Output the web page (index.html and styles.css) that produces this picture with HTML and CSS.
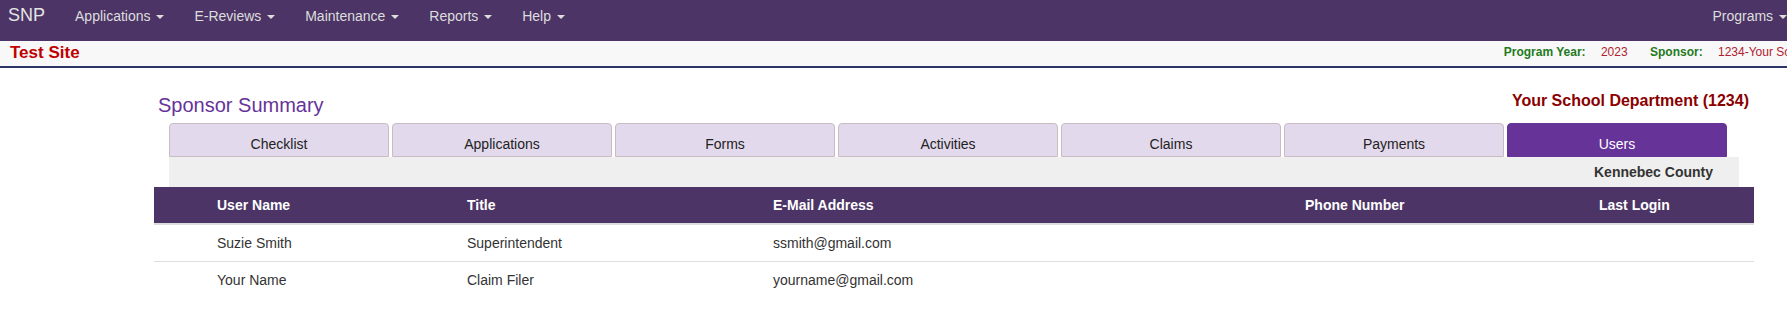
FILE: index.html
```html
<!DOCTYPE html>
<html lang="en">
<head>
    <meta charset="UTF-8">
    <meta name="viewport" content="width=device-width, initial-scale=1.0">
    <title>SNP - Sponsor Summary</title>
    <link rel="stylesheet" href="styles.css">
</head>
<body>
    <nav class="navbar">
        <a class="brand" href="#">SNP</a>
        <ul class="nav">
            <li><a href="#">Applications <span class="caret"></span></a></li>
            <li><a href="#">E-Reviews <span class="caret"></span></a></li>
            <li><a href="#">Maintenance <span class="caret"></span></a></li>
            <li><a href="#">Reports <span class="caret"></span></a></li>
            <li><a href="#">Help <span class="caret"></span></a></li>
        </ul>
        <ul class="nav nav-right">
            <li><a href="#">Programs <span class="caret"></span></a></li>
        </ul>
    </nav>

    <div class="site-bar">
        <span class="site-name">Test Site</span>
        <div class="site-info">
            <span class="info-label">Program Year:</span>
            <span class="info-value">2023</span>
            <span class="info-label">Sponsor:</span>
            <span class="info-value">1234-Your School Department</span>
        </div>
    </div>

    <div class="main">
        <div class="page-head">
            <h2>Sponsor Summary</h2>
            <h4>Your School Department (1234)</h4>
        </div>

        <ul class="tabs">
            <li><a href="#">Checklist</a></li>
            <li><a href="#">Applications</a></li>
            <li><a href="#">Forms</a></li>
            <li><a href="#">Activities</a></li>
            <li><a href="#">Claims</a></li>
            <li><a href="#">Payments</a></li>
            <li class="active"><a href="#">Users</a></li>
        </ul>
        <div class="tab-bar">Kennebec County</div>

        <table class="users">
            <colgroup>
                <col class="col-edit">
                <col class="col-name">
                <col class="col-title">
                <col class="col-email">
                <col class="col-phone">
                <col class="col-login">
            </colgroup>
            <thead>
                <tr>
                    <th></th>
                    <th>User Name</th>
                    <th>Title</th>
                    <th>E-Mail Address</th>
                    <th>Phone Number</th>
                    <th>Last Login</th>
                </tr>
            </thead>
            <tbody>
                <tr>
                    <td></td>
                    <td>Suzie Smith</td>
                    <td>Superintendent</td>
                    <td>ssmith@gmail.com</td>
                    <td></td>
                    <td></td>
                </tr>
                <tr>
                    <td></td>
                    <td>Your Name</td>
                    <td>Claim Filer</td>
                    <td>yourname@gmail.com</td>
                    <td></td>
                    <td></td>
                </tr>
            </tbody>
        </table>
    </div>
</body>
</html>
```

FILE: styles.css
```css
body {
    margin: 0;
    font-family: "Liberation Sans", Arial, sans-serif;
    font-size: 14px;
    color: #333;
    overflow-x: hidden;
}
a {
    text-decoration: none;
}

/* top menu */
.navbar {
    display: flex;
    align-items: flex-start;
    height: 41px;
    background-color: #4c3566;
}
.brand {
    padding: 5px 15px 0 8px;
    font-size: 18px;
    line-height: 20px;
    color: #e4e4e4;
}
.nav {
    display: flex;
    list-style: none;
    margin: 0;
    padding: 0;
}
.nav a {
    display: block;
    padding: 6px 15px 0;
    line-height: 20px;
    color: #dddddd;
    white-space: nowrap;
}
.nav-right {
    margin-left: auto;
    margin-right: -15px;
}
.caret {
    display: inline-block;
    width: 0;
    height: 0;
    margin-left: 2px;
    vertical-align: middle;
    border-top: 4px solid;
    border-right: 4px solid transparent;
    border-left: 4px solid transparent;
}

/* site bar */
.site-bar {
    display: flex;
    align-items: flex-start;
    height: 23px;
    padding: 2px 0 0 10px;
    background-color: #f8f8f8;
    border-bottom: 2px solid #2b3566;
    white-space: nowrap;
}
.site-name {
    font-size: 17px;
    font-weight: bold;
    line-height: 20px;
    color: #c00000;
}
.site-info {
    flex: none;
    margin: 1px -92px 0 auto;
    font-size: 12px;
    line-height: 16px;
}
.info-label {
    margin-left: 19px;
    font-weight: bold;
    color: #1f7a22;
}
.info-label:first-child {
    margin-left: 0;
}
.info-value {
    margin-left: 12px;
    color: #b02030;
}

/* page */
.main {
    width: 1600px;
    margin-left: 154px;
}
.page-head {
    display: flex;
    justify-content: space-between;
    align-items: flex-start;
}
.page-head h2 {
    margin: 25px 0 0 4px;
    font-size: 20px;
    font-weight: normal;
    line-height: 24px;
    color: #663399;
}
.page-head h4 {
    margin: 23px 5px 0 0;
    font-size: 16px;
    line-height: 20px;
    color: #8b0000;
}

.tabs {
    display: flex;
    gap: 3px;
    list-style: none;
    margin: 6px 15px 0;
    padding: 0;
}
.tabs a {
    display: block;
    box-sizing: border-box;
    width: 220px;
    padding: 10px 0 2px;
    line-height: 20px;
    text-align: center;
    color: #222;
    background-color: #e2d9ec;
    border: 1px solid #cbbcc4;
    border-radius: 4px 4px 0 0;
}
.tabs .active a {
    color: #fff;
    background-color: #663399;
    border-color: #663399;
}
.tab-bar {
    margin: 0 15px;
    padding: 5px 26px 5px;
    line-height: 20px;
    text-align: right;
    font-weight: bold;
    background-color: #efefef;
}

/* users table */
table.users {
    width: 100%;
    table-layout: fixed;
    border-collapse: collapse;
}
.col-edit { width: 55px; }
.col-name { width: 250px; }
.col-title { width: 306px; }
.col-email { width: 532px; }
.col-phone { width: 294px; }
.col-login { width: 163px; }
table.users th {
    padding: 8px;
    line-height: 20px;
    text-align: left;
    color: #fff;
    background-color: #4c3566;
    border-bottom: 2px solid #ddd;
}
table.users td {
    padding: 8px;
    line-height: 20px;
    border-top: 1px solid #ddd;
}
```
